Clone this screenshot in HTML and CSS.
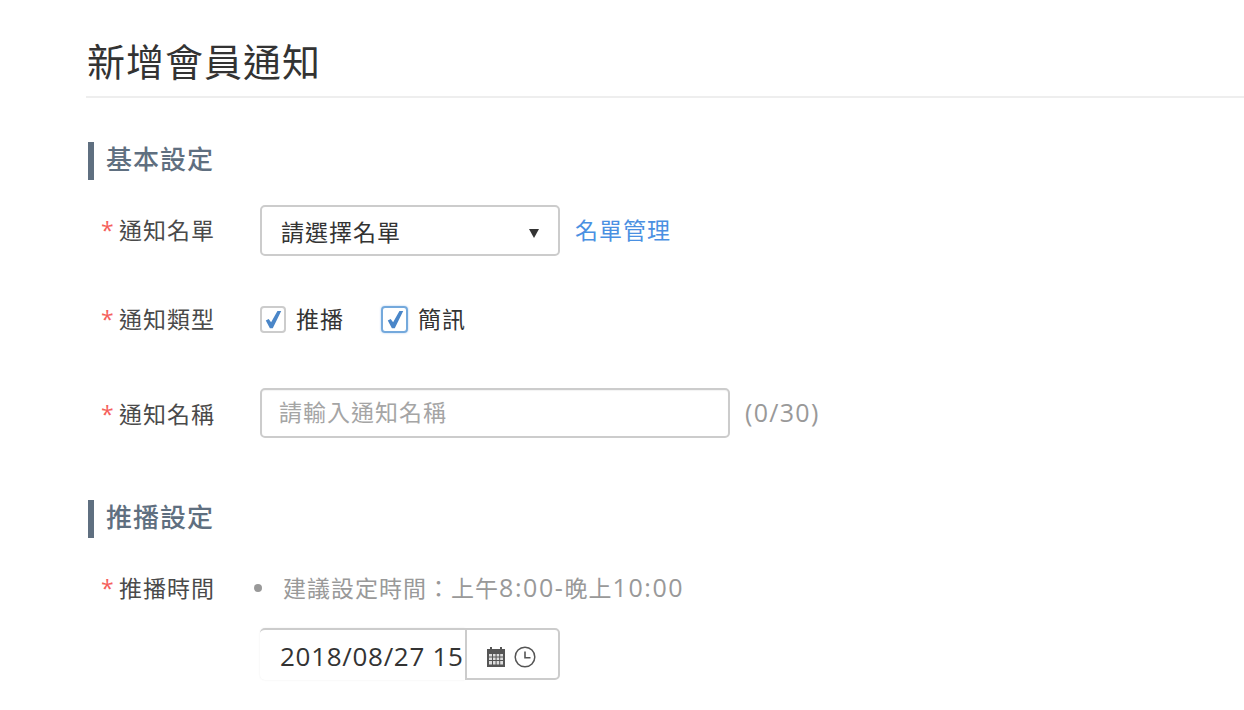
FILE: index.html
```html
<!DOCTYPE html>
<html lang="zh-Hant">
<head>
  <meta charset="UTF-8">
  <title>新增會員通知</title>
  <link rel="stylesheet" href="styles.css">
</head>
<body>
  <h1 class="page-title">新增會員通知</h1>

  <h2 class="section-title">基本設定</h2>

  <div class="form-row row-list">
    <label class="form-label raised"><span class="star">*</span>通知名單</label>
    <div class="select-box">
      <span>請選擇名單</span>
      <span class="caret"></span>
    </div>
    <a class="link" href="#">名單管理</a>
  </div>

  <div class="form-row row-type">
    <label class="form-label raised"><span class="star">*</span>通知類型</label>
    <span class="check-box">
      <svg width="20" height="20" viewBox="0 0 18 18"><path d="M2.5 9.5l2.6-1.4 2.2 3L13 1h3.4L8.8 16.5H6.2z" fill="#4a86c8"/></svg>
    </span>
    <span class="check-text">推播</span>
    <span class="check-box focused">
      <svg width="20" height="20" viewBox="0 0 18 18"><path d="M2.5 9.5l2.6-1.4 2.2 3L13 1h3.4L8.8 16.5H6.2z" fill="#4a86c8"/></svg>
    </span>
    <span class="check-text">簡訊</span>
  </div>

  <div class="form-row row-name">
    <label class="form-label"><span class="star">*</span>通知名稱</label>
    <input class="text-input" type="text" placeholder="請輸入通知名稱">
    <span class="counter">(0/30)</span>
  </div>

  <h2 class="section-title second">推播設定</h2>

  <div class="form-row row-time">
    <label class="form-label raised"><span class="star">*</span>推播時間</label>
    <ul class="hint-list">
      <li>建議設定時間：上午<span class="num">8:00-</span>晚上<span class="num">10:00</span></li>
    </ul>
  </div>

  <div class="date-box">
    <input class="date-input" type="text" value="2018/08/27 15:00">
    <div class="date-icons">
      <svg width="20" height="22" viewBox="0 0 20 22">
        <rect x="1" y="3" width="18" height="18" fill="#555"/>
        <rect x="4" y="1" width="2" height="4" fill="#555"/>
        <rect x="14" y="1" width="2" height="4" fill="#555"/>
        <path d="M3 8h3v2.5H3zM7 8h2.6v2.5H7zM10.6 8h2.6v2.5h-2.6zM14.2 8h2.8v2.5h-2.8zM3 11.5h3V14H3zM7 11.5h2.6V14H7zM10.6 11.5h2.6V14h-2.6zM14.2 11.5h2.8V14h-2.8zM3 15h3v3.5H3zM7 15h2.6v3.5H7zM10.6 15h2.6v3.5h-2.6zM14.2 15h2.8v3.5h-2.8z" fill="#ddd"/>
      </svg>
      <svg width="22" height="22" viewBox="0 0 22 22" fill="none" stroke="#555">
        <circle cx="11" cy="11" r="9.8" stroke-width="1.5"/>
        <path d="M11 5.5V11.8H16.5" stroke-width="1.6"/>
      </svg>
    </div>
  </div>
</body>
</html>
```

FILE: styles.css
```css
html, body {
  height: 100%;
}
body {
  margin: 0;
  padding: 0 0 0 86px;
  background-color: #fff;
  color: #333;
  font-family: "Open Sans", "Noto Sans CJK TC", sans-serif;
  overflow: hidden;
}
.page-title {
  margin: 0;
  height: 98px;
  box-sizing: border-box;
  padding: 35px 0 0 1px;
  border-bottom: 2px solid #eee;
  font-size: 38px;
  line-height: 52px;
  font-weight: 400;
  letter-spacing: 1px;
  color: #333;
}
.section-title {
  margin: 44px 0 0 2px;
  height: 38px;
  padding-left: 12px;
  border-left: 6px solid #5f6f80;
  font-size: 26px;
  line-height: 35px;
  font-weight: 500;
  letter-spacing: 1px;
  color: #5f6f80;
}
.section-title.second {
  margin-top: 62px;
}
.form-row {
  display: flex;
  align-items: center;
}
.form-label {
  width: 174px;
  box-sizing: border-box;
  padding-left: 15px;
  flex-shrink: 0;
  font-size: 23px;
  letter-spacing: 1px;
  color: #4a4a4a;
}
.form-label.raised {
  margin-top: -4px;
}
.star {
  display: inline-block;
  width: 18px;
  color: #f5605c;
  font-size: 23px;
  font-weight: 500;
  line-height: 20px;
}
.row-list {
  margin-top: 25px;
  height: 51px;
}
.select-box {
  width: 300px;
  height: 51px;
  box-sizing: border-box;
  padding: 0 19px 0 19px;
  border: 2px solid #ccc;
  border-radius: 5px;
  display: flex;
  align-items: center;
  justify-content: space-between;
  font-size: 23px;
  letter-spacing: 1px;
  color: #333;
}
.caret {
  width: 0;
  height: 0;
  margin-top: 6px;
  border-left: 5.5px solid transparent;
  border-right: 5.5px solid transparent;
  border-top: 9px solid #333;
}
.link {
  margin-left: 15px;
  font-size: 23px;
  letter-spacing: 1px;
  color: #4a90e2;
  text-decoration: none;
  margin-top: -3px;
}
.row-type {
  margin-top: 50px;
  height: 27px;
}
.check-box {
  width: 26px;
  height: 27px;
  box-sizing: border-box;
  border: 2px solid #ccc;
  border-radius: 4px;
  display: flex;
  align-items: center;
  justify-content: center;
}
.check-box.focused {
  width: 27px;
  border-color: #74a9dc;
  box-shadow: 0 0 2px rgba(74, 144, 226, 0.5);
}
.check-text {
  margin: -4px 37px 0 10px;
  font-size: 23px;
  letter-spacing: 1px;
  color: #333;
}
.row-name {
  margin-top: 55px;
  height: 50px;
}
.text-input {
  width: 470px;
  height: 50px;
  box-sizing: border-box;
  padding: 0 17px 2px;
  border: 2px solid #ccc;
  border-radius: 5px;
  outline: none;
  font-family: inherit;
  font-size: 23px;
  letter-spacing: 1px;
  box-shadow: inset 0 1px 1px rgba(0, 0, 0, 0.05);
}
.text-input::placeholder {
  color: #a5a5a5;
  opacity: 1;
}
.counter {
  margin: -2px 0 0 15px;
  font-size: 25px;
  font-weight: 500;
  letter-spacing: 1.3px;
  color: #999;
}
.row-time {
  margin-top: 33px;
  height: 36px;
}
.hint-list {
  margin: 0;
  padding: 0;
  list-style: none;
}
.hint-list li {
  position: relative;
  margin: -4px 0 0 -6px;
  padding-left: 29px;
  font-size: 23px;
  letter-spacing: 1px;
  color: #999;
}
.hint-list li::before {
  content: "";
  position: absolute;
  left: 0;
  top: 50%;
  width: 8px;
  height: 8px;
  margin-top: -3px;
  border-radius: 50%;
  background: #999;
}
.hint-list .num {
  font-size: 25px;
  font-weight: 500;
  letter-spacing: 1.6px;
}
.date-box {
  display: flex;
  width: 300px;
  height: 52px;
  margin: 21px 0 0 174px;
}
.date-input {
  width: 205px;
  height: 52px;
  box-sizing: border-box;
  padding: 2px 1px 0 20px;
  border: none;
  border-top: 2px solid #ccc;
  border-radius: 5px 0 0 5px;
  outline: none;
  font-family: inherit;
  font-size: 26px;
  letter-spacing: 0.7px;
  color: #333;
  box-shadow: 0 0 2px rgba(0, 0, 0, 0.08);
}
.date-icons {
  width: 95px;
  box-sizing: border-box;
  border: 2px solid #ccc;
  border-radius: 0 5px 5px 0;
  display: flex;
  align-items: center;
  justify-content: center;
  gap: 8px;
  padding: 6px 3px 0 0;
}
```
